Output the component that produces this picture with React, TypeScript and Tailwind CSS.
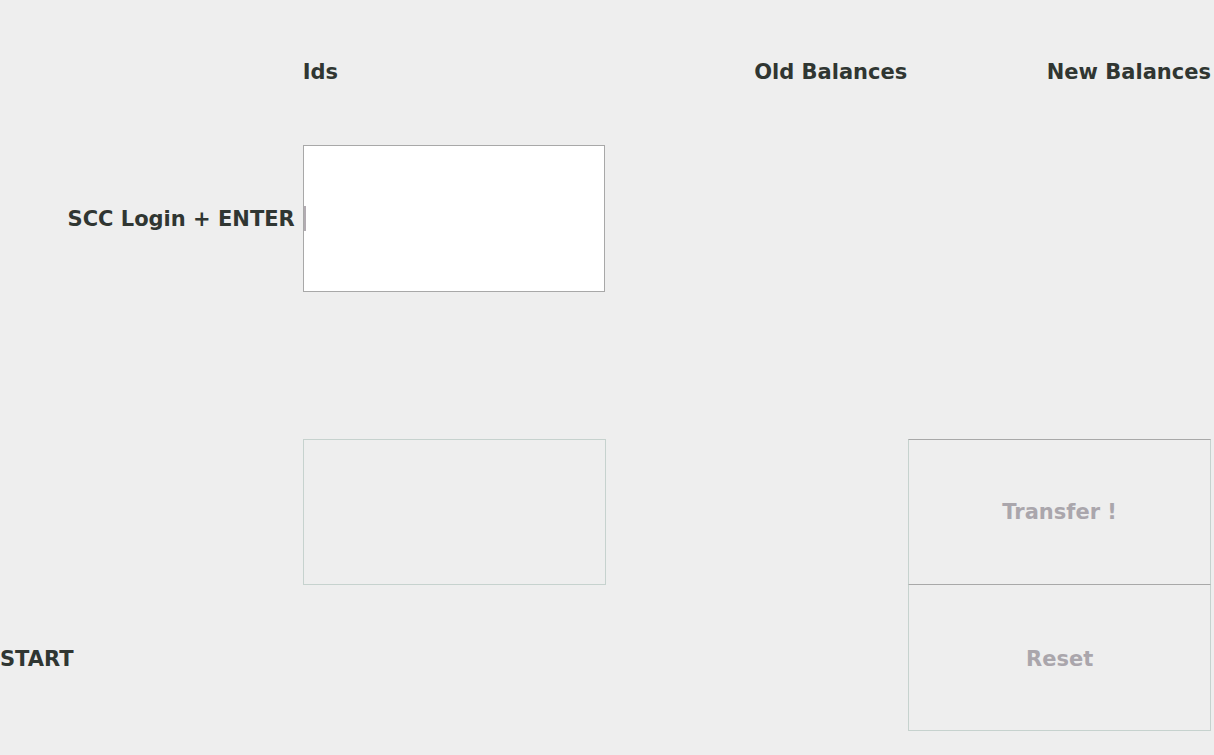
const font = { fontFamily: '"DejaVu Sans", "Liberation Sans", sans-serif' };

const App = () => {
  return (
    <div className="w-[1214px] h-[755px] bg-[#eeeeee] overflow-hidden" style={font}>
      <div className="w-[1211px] h-[731px] grid grid-cols-4 grid-rows-5 text-[21px] font-bold text-[#303632]">
        {/* row 0 */}
        <div />
        <div className="flex items-center">Ids</div>
        <div className="flex items-center justify-end pr-px">Old Balances</div>
        <div className="flex items-center justify-end">New Balances</div>

        {/* row 1 */}
        <div className="flex items-center justify-end pr-[8px]">SCC Login + ENTER</div>
        <div className="-mt-px mr-px border border-[#a8a8a8] bg-white flex items-center">
          <span className="w-[2px] h-[25px] bg-[#b2acb2]" />
        </div>
        <div />
        <div />

        {/* row 2 */}
        <div />
        <div />
        <div />
        <div />

        {/* row 3 */}
        <div />
        <div className="border border-[#c6d2ce]" />
        <div />
        <button
          disabled
          className="border border-[#c6d2ce] border-t-[#a8a8a8] border-b-[#a8a8a8] flex items-center justify-center pt-[2px] text-[#aaa6ac] font-bold"
        >
          Transfer !
        </button>

        {/* row 4 */}
        <div className="flex items-center pt-[4px]">START</div>
        <div />
        <div />
        <button
          disabled
          className="border border-t-0 border-[#c6d2ce] flex items-center justify-center pt-[4px] text-[#aaa6ac] font-bold"
        >
          Reset
        </button>
      </div>
    </div>
  );
};

export default App;
